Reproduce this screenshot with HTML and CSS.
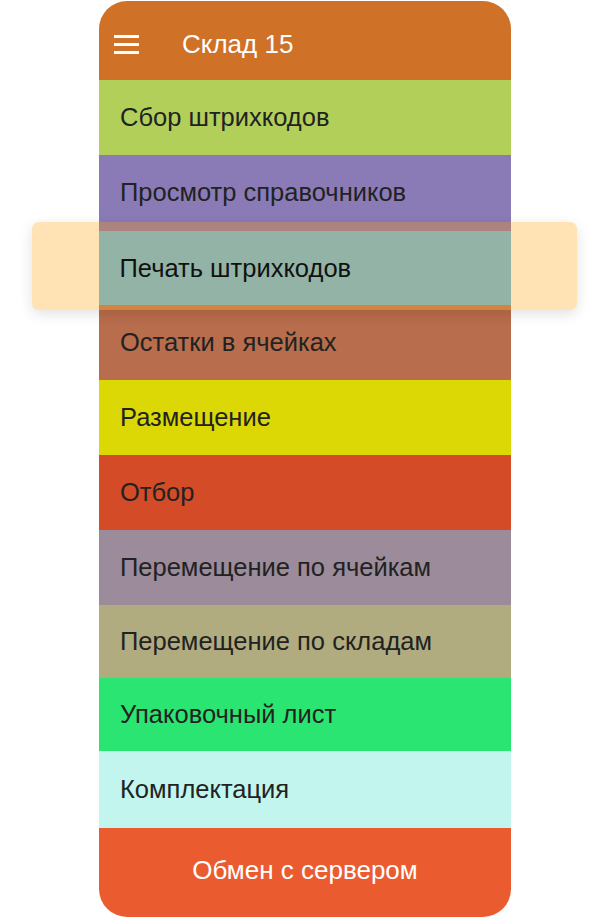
FILE: index.html
```
<!DOCTYPE html>
<html lang="ru">
<head>
    <meta charset="UTF-8">
    <meta name="viewport" content="width=device-width, initial-scale=1.0">
    <title>Склад 15</title>
    <link rel="stylesheet" href="styles.css">
</head>
<body>
    <div class="phone">
        <div class="header">
            <span class="burger"><i></i><i></i><i></i></span>
            <span class="header-title">Склад 15</span>
        </div>
        <div class="menu">
            <div class="item item-green">Сбор штрихкодов</div>
            <div class="item item-purple">Просмотр справочников</div>
            <div class="item item-teal">Печать штрихкодов</div>
            <div class="item item-brown">Остатки в ячейках</div>
            <div class="item item-yellow">Размещение</div>
            <div class="item item-red">Отбор</div>
            <div class="item item-mauve">Перемещение по ячейкам</div>
            <div class="item item-olive">Перемещение по складам</div>
            <div class="item item-lime">Упаковочный лист</div>
            <div class="item item-mint">Комплектация</div>
        </div>
        <div class="exchange">Обмен с сервером</div>

        <!-- выделенный пункт меню -->
        <div class="selected">
            <div class="selected-row">
                <div class="sel-top"></div>
                <div class="sel-mid">Печать штрихкодов</div>
                <div class="sel-bottom"></div>
            </div>
        </div>
    </div>
</body>
</html>
```
FILE: styles.css
```
body {
    margin: 0;
    background: #fff;
    font-family: "Liberation Sans", Arial, sans-serif;
}

.phone {
    position: relative;
    width: 412px;
    height: 916px;
    margin-left: 99px;
    margin-top: 1px;
    border-radius: 28px;
    display: flex;
    flex-direction: column;
}

.header {
    height: 79px;
    box-sizing: border-box;
    padding-top: 7px;
    background-color: #cf7127;
    border-radius: 28px 28px 0 0;
    display: flex;
    align-items: center;
    color: #fff;
}

.burger {
    display: flex;
    flex-direction: column;
    gap: 5px;
    margin-left: 15px;
    width: 25px;
}

.burger i {
    display: block;
    height: 3px;
    background: #fff;
}

.header-title {
    margin-left: 43px;
    font-size: 26px;
}

.menu {
    display: flex;
    flex-direction: column;
}

.item {
    height: 75px;
    display: flex;
    align-items: center;
    padding-left: 21px;
    font-size: 25.5px;
    color: #222;
}

.item-green { background-color: #b2cf5a; }
.item-purple { background-color: #8a7bb7; }
.item-teal { background-color: #92b3a6; }
.item-brown { background-color: #b86d4c; }
.item-yellow { background-color: #dcd806; }
.item-red { background-color: #d34b27; }
.item-mauve { background-color: #9b8b9b; }
.item-olive { background-color: #b0ac7f; height: 73px; }
.item-lime { background-color: #2ae571; height: 73px; }
.item-mint { background-color: #c1f5ee; height: 77px; }

.exchange {
    flex: 1;
    background-color: #ea5c30;
    border-radius: 0 0 28px 28px;
    display: flex;
    align-items: center;
    justify-content: center;
    color: #fff;
    font-size: 26px;
    padding-bottom: 4px;
}

.selected {
    position: absolute;
    left: -67px;
    top: 221px;
    width: 545px;
    height: 88px;
    background-color: #ffe3b5;
    border-radius: 7px;
    box-shadow: 0 4px 14px rgba(0, 0, 0, 0.12);
    display: flex;
    justify-content: center;
}

.selected-row {
    width: 412px;
    display: flex;
    flex-direction: column;
}

.sel-top {
    height: 9px;
    background-color: #ad8380;
}

.sel-mid {
    height: 74px;
    background-color: #92b3a6;
    display: flex;
    align-items: center;
    padding-left: 21px;
    font-size: 25.5px;
    color: #111;
}

.sel-bottom {
    flex: 1;
    background-color: #d5843f;
}
```
